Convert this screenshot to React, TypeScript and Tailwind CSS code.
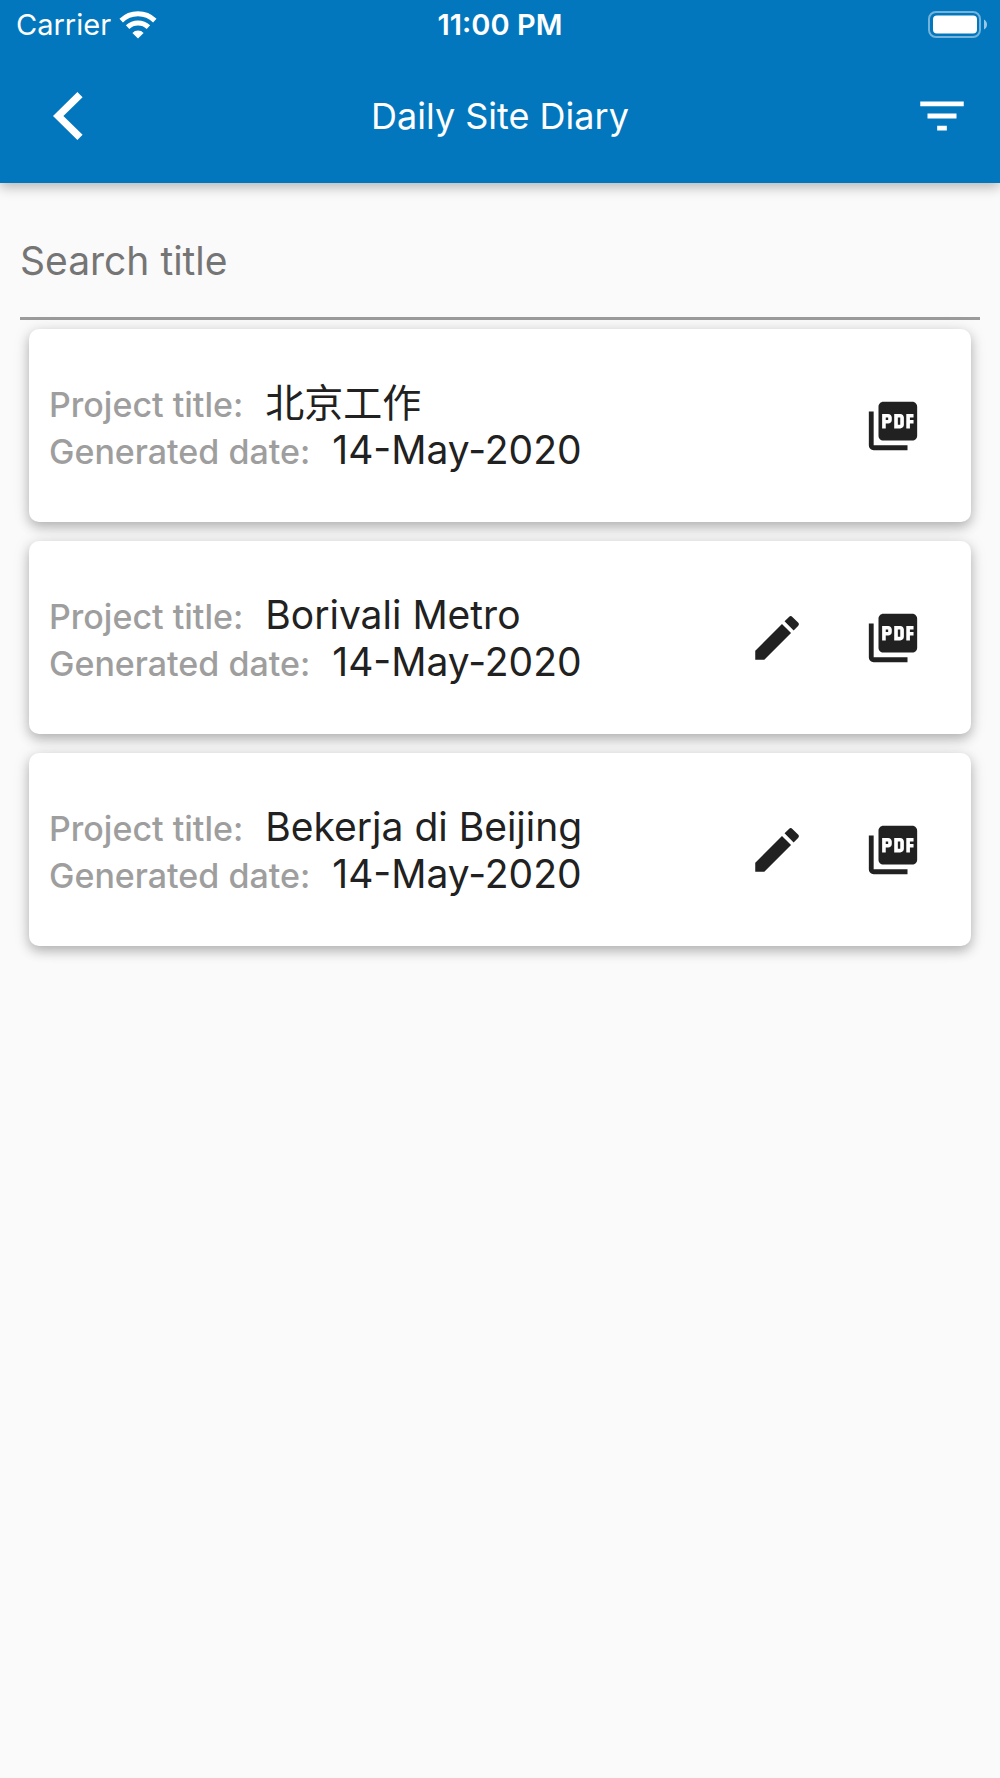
import { useState } from "react";
import { MdEdit, MdFilterList, MdPictureAsPdf } from "react-icons/md";

type Diary = {
  id: number;
  title: string;
  date: string;
  editable: boolean;
};

const diaries: Diary[] = [
  { id: 1, title: "北京工作", date: "14-May-2020", editable: false },
  { id: 2, title: "Borivali Metro", date: "14-May-2020", editable: true },
  { id: 3, title: "Bekerja di Beijing", date: "14-May-2020", editable: true },
];

function WifiIcon() {
  return (
    <svg width="38" height="28" viewBox="0 0 38 28">
      <g fill="none" stroke="white" strokeWidth="5">
        <path d="M2.2 9.6a24.2 24.2 0 0 1 33.6 0" />
        <path d="M8.6 16.1a15 15 0 0 1 20.8 0" />
      </g>
      <path d="M19 27.5l-5.6-5.6a8 8 0 0 1 11.2 0z" fill="white" />
    </svg>
  );
}

function BatteryIcon() {
  return (
    <svg width="60" height="28" viewBox="0 0 60 28">
      <rect x="1" y="1" width="51" height="25" rx="7" fill="none" stroke="white" strokeOpacity="0.45" strokeWidth="2" />
      <rect x="5" y="4.5" width="44" height="18" rx="4" fill="white" />
      <path d="M56 8.5c4 2 4 8 0 10z" fill="white" fillOpacity="0.6" />
    </svg>
  );
}

function StatusBar() {
  return (
    <div className="grid h-[50px] grid-cols-3 items-center px-3 text-[29px] leading-[34px]">
      <div className="flex items-center gap-2 pl-1">
        <span>Carrier</span>
        <WifiIcon />
      </div>
      <span className="text-center font-semibold">11:00 PM</span>
      <div className="flex justify-end">
        <BatteryIcon />
      </div>
    </div>
  );
}

function Header() {
  return (
    <header className="relative bg-[#0277bd] pb-px text-white shadow-[0_4px_12px_rgba(0,0,0,0.28)]">
      <StatusBar />
      <div className="grid h-[132px] grid-cols-[136px_1fr_136px] items-center">
        <button type="button" aria-label="Back" className="flex h-[116px] items-center justify-center">
          <svg width="30" height="48" viewBox="0 0 30 48" fill="currentColor">
            <path d="M24.4 0L0 24l24.4 24 5.2-5.2L10.4 24 29.6 5.2z" />
          </svg>
        </button>
        <h1 className="text-center text-[36px] leading-[44px]">Daily Site Diary</h1>
        <button type="button" aria-label="Filter" className="flex size-[116px] items-center justify-center justify-self-end">
          <MdFilterList className="size-[58px]" />
        </button>
      </div>
    </header>
  );
}

function DiaryCard({ diary }: { diary: Diary }) {
  return (
    <li className="flex h-[193px] items-center rounded-[10px] bg-white px-5 shadow-[0_5px_12px_rgba(0,0,0,0.24),0_2px_18px_rgba(0,0,0,0.1)]">
      <dl className="flex-1 text-[39px] leading-[47px]">
        <div className="flex items-baseline gap-[22px]">
          <dt className="text-[34px] leading-none font-medium text-[#9e9e9e]">Project title:</dt>
          <dd>{diary.title}</dd>
        </div>
        <div className="flex items-baseline gap-[22px]">
          <dt className="text-[34px] leading-none font-medium text-[#9e9e9e]">Generated date:</dt>
          <dd>{diary.date}</dd>
        </div>
      </dl>
      {diary.editable && (
        <button type="button" aria-label="Edit" className="flex size-[116px] items-center justify-center">
          <MdEdit className="size-[58px]" />
        </button>
      )}
      <button type="button" aria-label="Open PDF" className="flex size-[116px] items-center justify-center">
        <MdPictureAsPdf className="size-[58px]" />
      </button>
    </li>
  );
}

export default function App() {
  const [search, setSearch] = useState("");

  const filtered = diaries.filter((d) =>
    d.title.toLowerCase().includes(search.toLowerCase())
  );

  return (
    <div className="min-h-screen bg-[#fafafa] font-['Inter','Noto_Sans_CJK_SC',sans-serif] text-[#212121]">
      <Header />
      <main className="px-5">
        <input
          type="text"
          aria-label="Search title"
          placeholder="Search title"
          value={search}
          onChange={(e) => setSearch(e.target.value)}
          className="h-[137px] w-full border-b-[3px] border-[#9b9b9b] bg-transparent pt-5 text-[39px] outline-none placeholder:text-[#757575]"
        />
        <ul className="flex flex-col gap-[19px] px-[9px] pt-[9px]">
          {filtered.map((d) => (
            <DiaryCard key={d.id} diary={d} />
          ))}
        </ul>
      </main>
    </div>
  );
}
